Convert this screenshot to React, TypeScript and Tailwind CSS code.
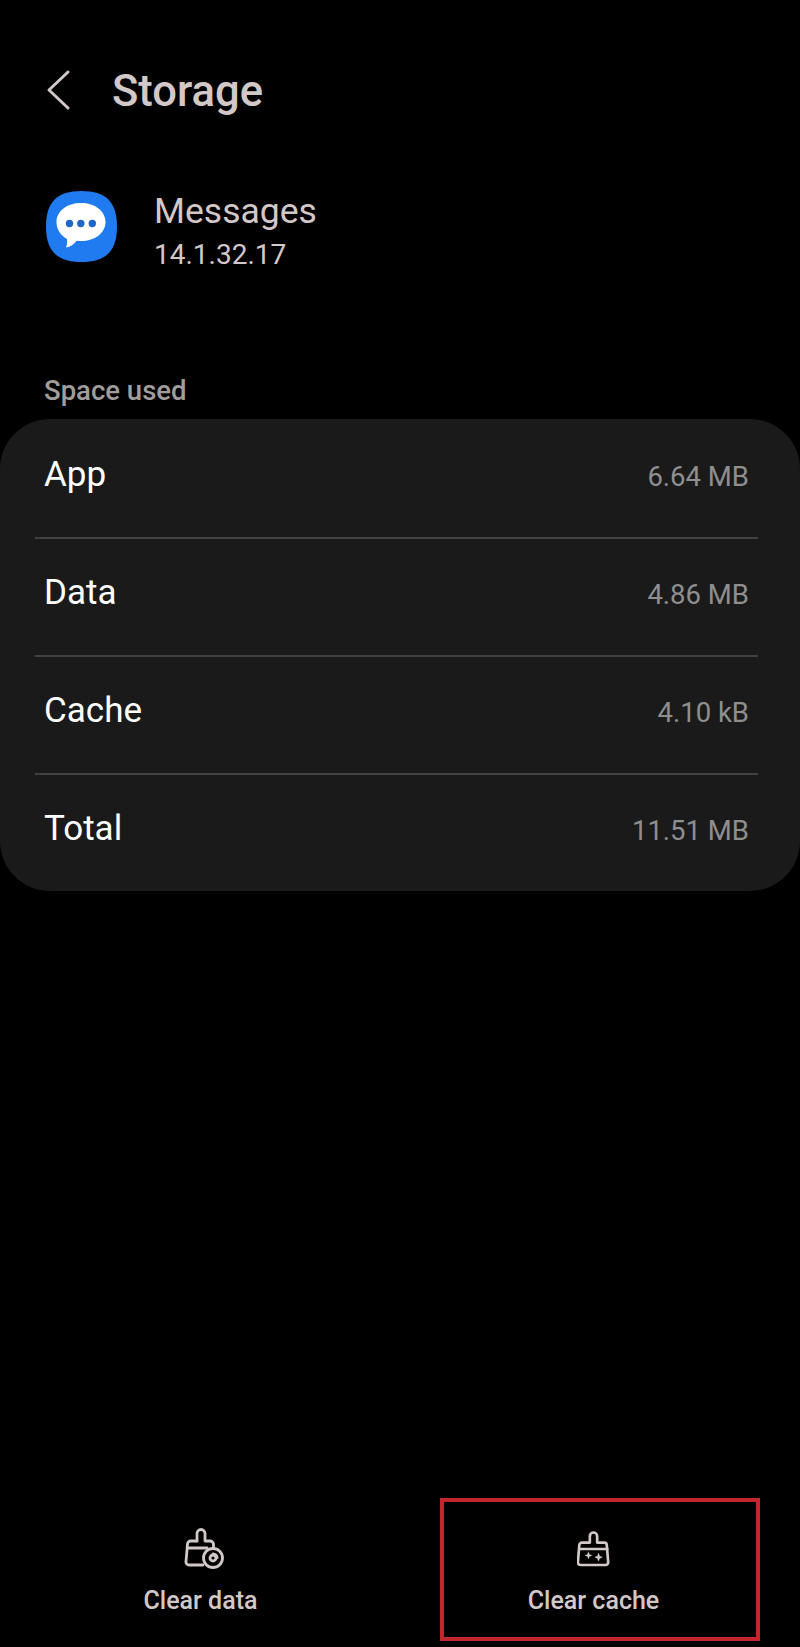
const rows = [
  { label: 'App', value: '6.64 MB' },
  { label: 'Data', value: '4.86 MB' },
  { label: 'Cache', value: '4.10 kB' },
  { label: 'Total', value: '11.51 MB' },
];

function BrushData() {
  return (
    <svg className="ml-[6px]" width="42" height="42" viewBox="0 0 42 42" fill="none" stroke="#d3c8c8" strokeWidth="2.8" strokeLinecap="round" strokeLinejoin="round">
      <path d="M14 13V5.500a4 4 0 0 1 8 0V13h5a3.500 3.500 0 0 1 3.500 3.500v3" />
      <path d="M14 13H7.500A3 3 0 0 0 4.500 16L3 33.500A3 3 0 0 0 6 37h14" />
      <path d="M4.500 20H24" />
      <circle cx="30" cy="30" r="9.500" />
      <circle cx="30" cy="30" r="3" />
      <path d="M30 25.500c2.500 0 4.500 2 4.500 4.500" strokeWidth="2" />
    </svg>
  );
}

function BrushCache() {
  return (
    <svg width="33" height="38" viewBox="0 0 36 38" fill="none" stroke="#d3c8c8" strokeWidth="2.900" strokeLinecap="round" strokeLinejoin="round">
      <path d="M14 12V5a4 4 0 0 1 8 0v7h7.500a3 3 0 0 1 3 3l1.500 18a3 3 0 0 1-3 3.500H4a3 3 0 0 1-3-3.500L2.500 15a3 3 0 0 1 3-3z" />
      <path d="M3 19h30" />
      <path d="M12.500 22.500l1 2.500 2.500 1-2.500 1-1 2.500-1-2.500-2.500-1 2.500-1z" fill="#d3c8c8" strokeWidth="0.600" />
      <path d="M23.500 24l1.200 2.800 2.800 1.200-2.800 1.200-1.200 2.800-1.200-2.800-2.800-1.200 2.800-1.200z" fill="#d3c8c8" strokeWidth="0.600" />
    </svg>
  );
}

export default function App() {
  return (
    <div className="flex h-[1647px] w-[800px] flex-col overflow-hidden bg-black font-['Roboto',sans-serif]">
      {/* header */}
      <div className="mt-[60px] flex h-[62px] items-center pl-[46px]">
        <svg className="-mt-[2px]" width="26" height="42" viewBox="0 0 26 42" fill="none" stroke="#d3c8c8" strokeWidth="3" strokeLinecap="round" strokeLinejoin="round">
          <path d="M22 3 3 21l19 18" />
        </svg>
        <span className="ml-[40px] mt-[2px] text-[43.500px] font-medium leading-none text-[#d3c8c8]">Storage</span>
      </div>

      {/* app info */}
      <div className="mt-[69px] flex items-start pl-[46px]">
        <svg width="71" height="71" viewBox="0 0 71 71">
          <path d="M35.500 0C60 0 71 11 71 35.500S60 71 35.500 71 0 60 0 35.500 11 0 35.500 0z" fill="#1f7bef" />
          <path d="M35 12C49 12 59.500 20 59.500 31S49 50 35 50c-1.500 0-3-.1-4.500-.3-2.500 3.500-6 6-10.500 6.800 1-2.500 1.300-5 1-8.500C14.500 44.500 10.500 38 10.500 31 10.500 20 21 12 35 12z" fill="#fff" />
          <circle cx="23.500" cy="32.500" r="3.700" fill="#1f66c9" />
          <circle cx="34.800" cy="32.500" r="3.700" fill="#1f66c9" />
          <circle cx="46.300" cy="32.500" r="3.700" fill="#1f66c9" />
        </svg>
        <div className="ml-[37px] flex flex-col text-[#d3c8c8]">
          <span className="text-[35.500px] leading-[40px]">Messages</span>
          <span className="mt-[6px] text-[28px] leading-[36px]">14.1.32.17</span>
        </div>
      </div>

      {/* space used */}
      <div className="mt-[103px] pl-[44px] text-[27.500px] font-medium leading-[30px] text-[#a09d9d]">Space used</div>
      <div className="mt-[13px] rounded-[50px] bg-[#1a1a1a] pt-[2px]">
        {rows.map((row, i) => (
          <div
            key={row.label}
            className={`ml-[35px] mr-[42px] flex items-center justify-between pb-[4px] pl-[9px] pr-[9px] ${i < rows.length - 1 ? 'h-[118px] border-b-2 border-[#414141]' : 'h-[116px]'}`}
          >
            <span className="mb-[4px] text-[35px] text-white">{row.label}</span>
            <span className="text-[27.500px] text-[#8f8f8f]">{row.value}</span>
          </div>
        ))}
      </div>

      {/* bottom actions */}
      <div className="mb-[6px] mt-auto grid h-[143px] grid-cols-2 pl-[4px] pr-[10px]">
        <div className="flex flex-col items-center pt-[30px]">
          <BrushData />
          <span className="mt-[16px] text-[25px] font-medium leading-[30px] text-[#d3c8c8]">Clear data</span>
        </div>
        <div className="relative flex flex-col items-center pt-[32px]">
          <BrushCache />
          <span className="mt-[18px] text-[25px] font-medium leading-[30px] text-[#d3c8c8]">Clear cache</span>
          <div className="absolute left-[43px] top-0 h-[143px] w-[320px] border-4 border-[#c4262e]" />
        </div>
      </div>
    </div>
  );
}
